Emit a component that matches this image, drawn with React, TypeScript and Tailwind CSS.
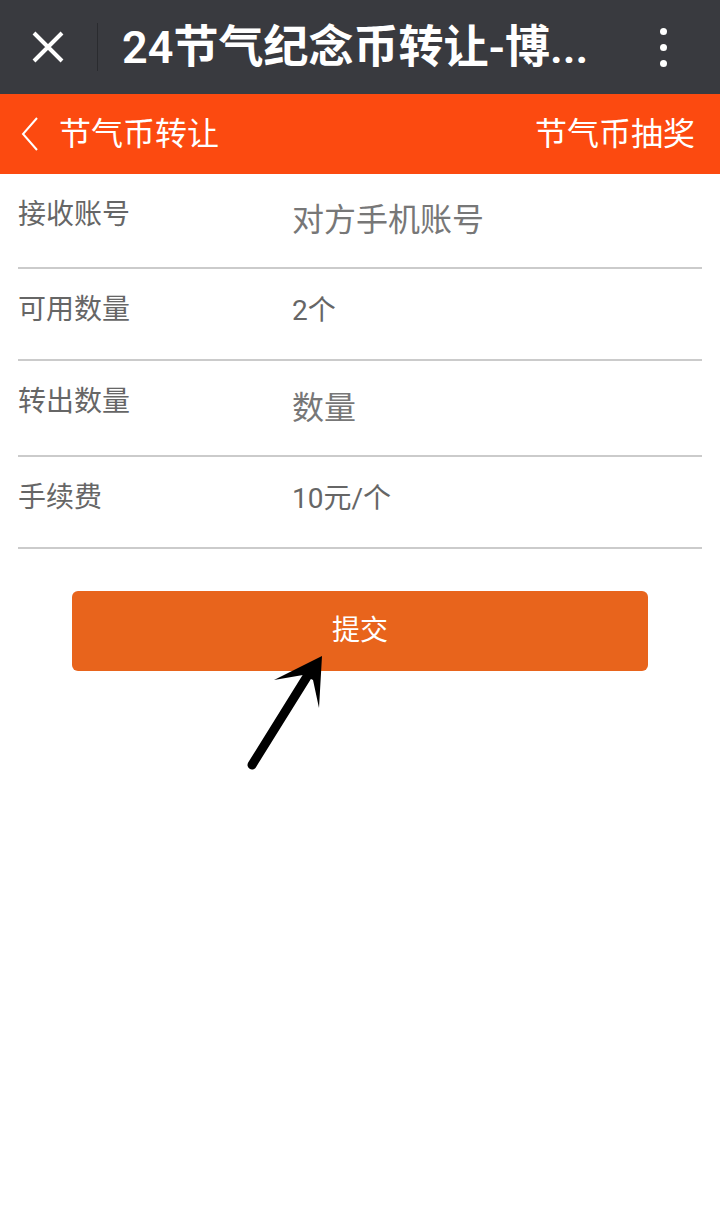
import React from 'react';

const font = { fontFamily: 'Roboto, "Noto Sans CJK SC", sans-serif' };

function Row({ label, value, placeholder, h, vTop }: { label: string; value: string; placeholder?: boolean; h: string; vTop: string }) {
  return (
    <div className={`flex items-start border-b-2 border-[#cbcbcb] ${h}`}>
      <div className="w-[274px] mt-[27px] text-[28px] leading-[28px] text-[#666]">{label}</div>
      <div className={`${vTop} ${placeholder ? 'text-[32px] leading-[32px] text-[#777]' : 'text-[28px] leading-[28px] text-[#666]'}`}>{value}</div>
    </div>
  );
}

export default function App() {
  return (
    <div className="relative w-[720px] h-[1230px] bg-white overflow-hidden" style={font}>
      {/* top bar */}
      <div className="h-[94px] bg-[#393a3f] flex items-center">
        <svg className="ml-[32px] w-[32px] h-[32px]" viewBox="0 0 32 32">
          <path d="M2 2 L30 30 M30 2 L2 30" stroke="white" strokeWidth="4" />
        </svg>
        <div className="ml-[33px] w-px h-[48px] bg-[#2a2b2f]" />
        <div className="ml-[24px] text-[45px] leading-none font-semibold text-white whitespace-nowrap">24节气纪念币转让-博...</div>
        <div className="ml-auto mr-[53px] flex flex-col gap-[9px]">
          <div className="w-[7px] h-[7px] rounded-full bg-white" />
          <div className="w-[7px] h-[7px] rounded-full bg-white" />
          <div className="w-[7px] h-[7px] rounded-full bg-white" />
        </div>
      </div>

      {/* orange nav */}
      <div className="h-[80px] bg-[#fc4a10] flex items-center text-white">
        <svg className="ml-[21px] w-[18px] h-[34px]" viewBox="0 0 18 34">
          <path d="M16 1 L2 17 L16 33" stroke="white" strokeWidth="2" fill="none" />
        </svg>
        <div className="ml-[20px] text-[32px] leading-none">节气币转让</div>
        <div className="ml-auto mr-[25px] text-[32px] leading-none">节气币抽奖</div>
      </div>

      {/* form */}
      <div className="px-[18px]">
        <Row label="接收账号" value="对方手机账号" placeholder h="h-[95px]" vTop="mt-[30px]" />
        <Row label="可用数量" value="2个" h="h-[92px]" vTop="mt-[28px]" />
        <Row label="转出数量" value="数量" placeholder h="h-[96px]" vTop="mt-[31px]" />
        <Row label="手续费" value="10元/个" h="h-[92px]" vTop="mt-[28px]" />
      </div>

      <div className="mt-[42px] flex justify-center">
        <button className="w-[576px] h-[80px] rounded-[6px] bg-[#e8641c] text-white text-[28px]">提交</button>
      </div>

      {/* annotation arrow */}
      <svg className="absolute left-0 top-0 w-[720px] h-[1230px] pointer-events-none" viewBox="0 0 720 1230">
        <line x1="252" y1="765" x2="308" y2="675" stroke="black" strokeWidth="9" strokeLinecap="round" />
        <polygon points="322,656 274,680 303,675 313,680 319,708" fill="black" />
      </svg>
    </div>
  );
}
